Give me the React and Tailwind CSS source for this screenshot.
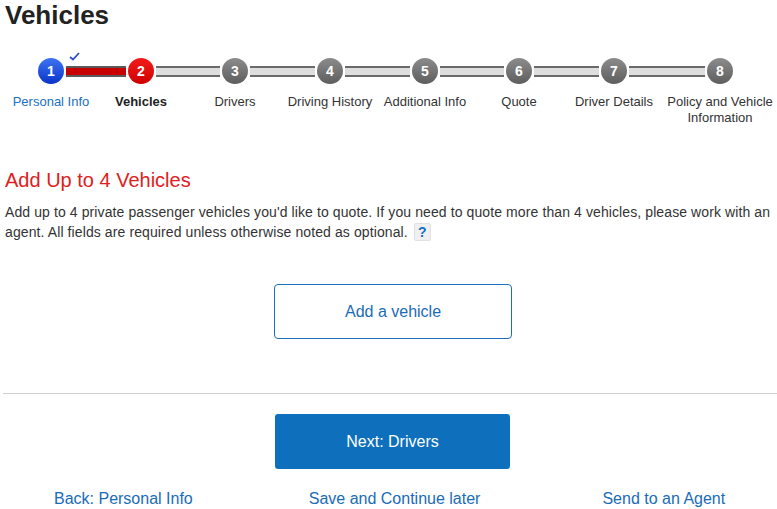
import React from "react";

const steps = [
  { n: 1, label: "Personal Info", w: "w-[92px]", state: "done" },
  { n: 2, label: "Vehicles", w: "w-[88px]", state: "current" },
  { n: 3, label: "Drivers", w: "w-[100px]", state: "todo" },
  { n: 4, label: "Driving History", w: "w-[90px]", state: "todo" },
  { n: 5, label: "Additional Info", w: "w-[100px]", state: "todo" },
  { n: 6, label: "Quote", w: "w-[88px]", state: "todo" },
  { n: 7, label: "Driver Details", w: "w-[102px]", state: "todo" },
  { n: 8, label: "Policy and Vehicle Information", w: "w-[110px]", state: "todo" },
];

function Bar({ kind }) {
  if (kind === "none") return <div className="flex-1" />;
  if (kind === "red")
    return <div className="flex-1 h-[11px] border-y-2 border-[#5a5a5a] bg-[#c80000]" />;
  return <div className="flex-1 h-[11px] border-y-2 border-[#6a6a6a] bg-[#dedede]" />;
}

function Circle({ n, state }) {
  const fill =
    state === "done"
      ? "bg-linear-to-b from-[#3f72f2] to-[#0b33c9]"
      : state === "current"
      ? "bg-linear-to-b from-[#f21a1a] to-[#d00000]"
      : "bg-linear-to-b from-[#8c8c8c] to-[#5e5e5e]";
  return (
    <div className="relative w-[30px] h-[30px] shrink-0 rounded-full bg-white p-[2px]">
      <div
        className={`w-full h-full rounded-full ${fill} flex items-center justify-center text-white font-bold text-[14px] leading-none`}
      >
        {n}
      </div>
      {state === "done" && (
        <svg
          className="absolute left-[33px] top-[-4px]"
          width="11"
          height="9"
          viewBox="0 0 11 9"
        >
          <path d="M1 5 L4 7.5 L10 1" fill="none" stroke="#2a4fc8" strokeWidth="1.8" />
        </svg>
      )}
    </div>
  );
}

export default function App() {
  return (
    <div className="w-[777px] min-h-[509px] bg-white font-['Liberation_Sans',Arial,sans-serif] text-[#333]">
      <h1 className="pl-[5px] pt-[1px] text-[26px] leading-[28px] font-bold text-[#222]">
        Vehicles
      </h1>

      <div className="mt-[27px] pl-[5px] flex items-start">
        {steps.map((s, i) => {
          const left =
            i === 0 ? "none" : steps[i - 1].state === "done" ? "red" : "gray";
          const right =
            i === steps.length - 1 ? "none" : s.state === "done" ? "red" : "gray";
          return (
            <div key={s.n} className={`${s.w} flex flex-col items-center`}>
              <div className="w-full flex items-center h-[30px]">
                <Bar kind={left} />
                <Circle n={s.n} state={s.state} />
                <Bar kind={right} />
              </div>
              <div
                className={`mt-[8px] text-center text-[13px] leading-[16px] ${
                  s.state === "done"
                    ? "text-[#1a6fc0]"
                    : s.state === "current"
                    ? "font-bold text-[#222]"
                    : "text-[#333]"
                }`}
              >
                {s.label}
              </div>
            </div>
          );
        })}
      </div>

      <h2 className="mt-[42px] pl-[5px] text-[20px] leading-[24px] text-[#e0201c]">
        Add Up to 4 Vehicles
      </h2>
      <p className="mt-[10px] pl-[5px] w-[777px] text-[14px] leading-[20px] tracking-[0.1px] text-[#333]">
        Add up to 4 private passenger vehicles you'd like to quote. If you need to quote more than 4 vehicles, please work with an agent. All fields are required unless otherwise noted as optional.
        <span className="inline-block align-top mt-[1px] ml-[6px] w-[17px] h-[18px] rounded-[2px] bg-[#efefef] border border-[#e2e2e2] text-center text-[#1570c0] font-bold text-[14px] leading-[16px] tracking-normal">
          ?
        </span>
      </p>

      <div className="mt-[42px] ml-[274px] w-[238px] h-[55px] rounded-[4px] border border-[#1a70bd] flex items-center justify-center text-[16px] text-[#1a6cb8]">
        Add a vehicle
      </div>

      <div className="mt-[54px] ml-[3px] h-px bg-[#cfcfcf]" />

      <div className="mt-[20px] ml-[275px] w-[235px] h-[55px] rounded-[3px] bg-[#0e70bd] flex items-center justify-center text-[16px] text-white">
        Next: Drivers
      </div>

      <div className="mt-[21px] flex text-[16px] leading-[18px] text-[#1a6cb8]">
        <span className="ml-[54px]">Back: Personal Info</span>
        <span className="ml-[116px]">Save and Continue later</span>
        <span className="ml-[122px]">Send to an Agent</span>
      </div>
    </div>
  );
}
